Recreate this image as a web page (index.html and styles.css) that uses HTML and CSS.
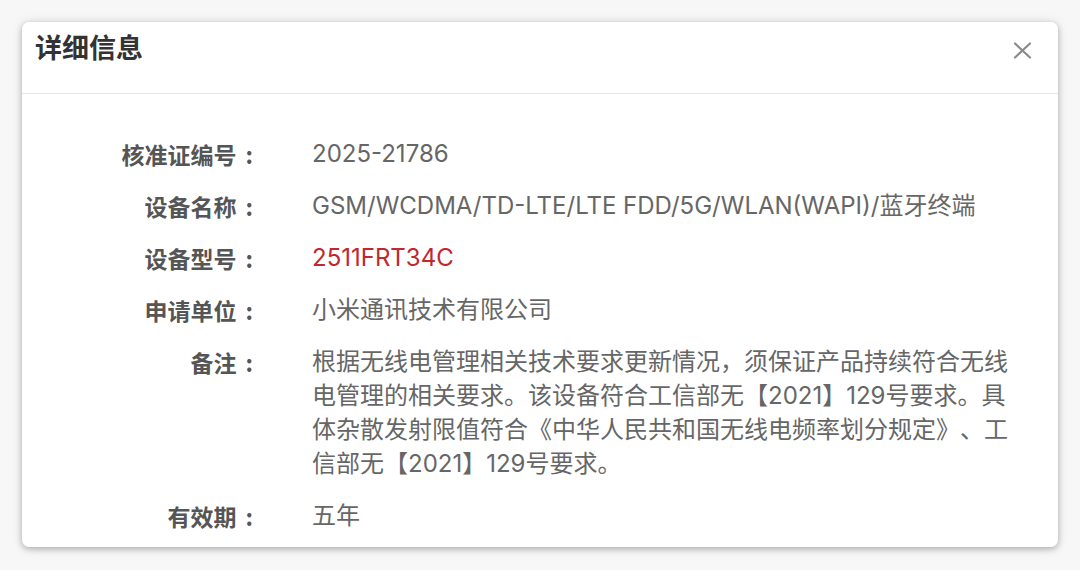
FILE: index.html
```html
<!DOCTYPE html>
<html lang="zh-CN">
<head>
<meta charset="utf-8">
<title>详细信息</title>
<link rel="stylesheet" href="styles.css">
</head>
<body>
<div class="dialog">
  <div class="dialog-header">
    <h2 class="dialog-title">详细信息</h2>
    <button class="dialog-close" aria-label="关闭">
      <svg width="19" height="17" viewBox="0 0 19 17"><path d="M2 1.5 L17 15.5 M17 1.5 L2 15.5" stroke="#8a8a8a" stroke-width="2.2" stroke-linecap="round" fill="none"/></svg>
    </button>
  </div>
  <div class="dialog-body">
    <div class="info-list">
      <div class="info-label">核准证编号<span class="colon">:</span></div>
      <div class="info-value">2025-21786</div>
      <div class="info-label">设备名称<span class="colon">:</span></div>
      <div class="info-value">GSM/WCDMA/TD-LTE/LTE FDD/5G/WLAN(WAPI)/蓝牙终端</div>
      <div class="info-label">设备型号<span class="colon">:</span></div>
      <div class="info-value info-red">2511FRT34C</div>
      <div class="info-label">申请单位<span class="colon">:</span></div>
      <div class="info-value">小米通讯技术有限公司</div>
      <div class="info-label">备注<span class="colon">:</span></div>
      <div class="info-value">根据无线电管理相关技术要求更新情况，须保证产品持续符合无线电管理的相关要求。该设备符合工信部无【2021】129号要求。具体杂散发射限值符合《中华人民共和国无线电频率划分规定》、工信部无【2021】129号要求。</div>
      <div class="info-label">有效期<span class="colon">:</span></div>
      <div class="info-value">五年</div>
    </div>
  </div>
</div>
</body>
</html>
```

FILE: styles.css
```css
html, body {
  margin: 0;
  padding: 0;
}
body {
  background: #f7f7f7;
  width: 1080px;
  height: 570px;
  overflow: hidden;
  padding: 22px 22px 0 22px;
  box-sizing: border-box;
  font-family: "Noto Sans CJK SC", "Noto Sans", sans-serif;
}
.dialog {
  background: #fff;
  border-radius: 7px;
  box-shadow: 0 2px 6px rgba(0,0,0,0.28), 0 0 14px rgba(0,0,0,0.08);
  height: 525px;
  overflow: hidden;
  display: flex;
  flex-direction: column;
}
.dialog-header {
  height: 72px;
  flex: 0 0 auto;
  border-bottom: 1px solid #e6e6e6;
  display: flex;
  align-items: flex-start;
  justify-content: space-between;
  padding: 11px 26px 0 13px;
  box-sizing: border-box;
}
.dialog-title {
  margin: 0;
  font-size: 27px;
  font-weight: 700;
  color: #333;
  line-height: 27px;
}
.dialog-close {
  border: 0;
  background: none;
  padding: 0;
  margin-top: 9px;
  width: 19px;
  height: 17px;
  cursor: pointer;
  display: block;
}
.dialog-close svg { display: block; }
.dialog-body {
  padding: 43px 0 0 0;
}
.info-list {
  display: grid;
  grid-template-columns: 231px 706px;
  column-gap: 59px;
  row-gap: 18px;
}
.info-label {
  text-align: right;
  font-size: 23px;
  font-weight: 700;
  color: #555;
  line-height: 34px;
}
.colon {
  margin-left: 9px;
}
.info-value {
  font-family: "Inter", "Noto Sans CJK SC", sans-serif;
  font-size: 24px;
  color: #666;
  line-height: 34px;
  text-spacing-trim: space-all;
}
.info-red {
  color: #c1272d;
}
```
